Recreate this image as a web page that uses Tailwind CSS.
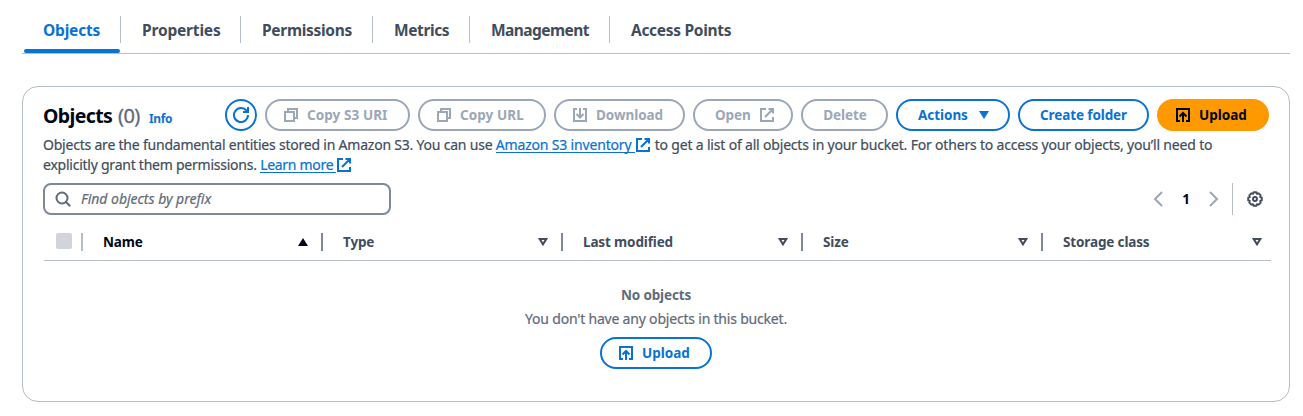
<!DOCTYPE html>
<html lang="en">
<head>
<meta charset="utf-8">
<title>Objects</title>
<script src="https://cdn.jsdelivr.net/npm/@tailwindcss/browser@4"></script>
</head>
<body class="h-[416px] overflow-hidden bg-white pl-[22px] pr-[13px] font-['Noto_Sans',sans-serif] text-sm text-[#414d5c]">
<svg class="hidden">
  <symbol id="copy" viewBox="0 0 16 16"><path fill="none" stroke="currentColor" stroke-width="2" d="M2 5h9v9H2zM5 5V2h9v9h-3"/></symbol>
  <symbol id="external" viewBox="0 0 16 16"><path fill="none" stroke="currentColor" stroke-width="2" d="M14 10v4H2V2h5M9.500 2H14v4.500M6 10l8-8"/></symbol>
  <symbol id="download" viewBox="0 0 16 16"><path fill="none" stroke="currentColor" stroke-width="2" d="M5 2H2v12h12V2h-3M8 1v9.500M4.500 7 8 10.500 11.500 7"/></symbol>
  <symbol id="upload" viewBox="0 0 16 16"><path fill="none" stroke="currentColor" stroke-width="2" d="M5 14H2V2h12v12h-3M8 15V6M4.500 9.500 8 6l3.500 3.500"/></symbol>
  <symbol id="down" viewBox="0 0 10 8"><path fill="none" stroke="currentColor" stroke-width="2" d="M1.700 1h6.600L5 6.300z"/></symbol>
</svg>

<nav class="flex h-[54px] border-b border-[#b6bec9] pt-4 text-[15.5px] leading-[28px] font-bold">
  <div class="relative ml-0.5 h-[27px] w-[97px] border-r border-[#b6bec9] pl-[19px] tracking-[-0.2px] text-[#0972d3]">Objects<span class="absolute top-[33px] left-0 h-1 w-24 rounded-[2px] bg-[#0972d3]"></span></div>
  <div class="h-[27px] w-[120px] border-r border-[#b6bec9] pl-[21px] tracking-[-0.18px]">Properties</div>
  <div class="h-[27px] w-[132px] border-r border-[#b6bec9] pl-[21px] tracking-[-0.3px]">Permissions</div>
  <div class="h-[27px] w-[97px] border-r border-[#b6bec9] pl-[21px] tracking-[-0.4px]">Metrics</div>
  <div class="h-[27px] w-[140px] border-r border-[#b6bec9] pl-[21px] tracking-[-0.55px]">Management</div>
  <div class="h-[27px] pl-[21px] tracking-[-0.3px]">Access Points</div>
</nav>

<main class="mt-8 h-[316px] rounded-2xl border border-[#b6bec9] px-5 pt-3">
  <header class="flex h-8 items-center justify-between">
    <h1 class="flex items-baseline pt-0.5 leading-8 whitespace-nowrap"><span class="w-[75px] text-[19.5px] font-bold tracking-[-0.62px] text-[#000716]">Objects</span><span class="w-[31px] text-[20px] tracking-[-0.6px] text-[#5f6b7a] [-webkit-text-stroke:0.3px_currentColor]">(0)</span><a class="text-xs font-bold tracking-[-0.4px] text-[#0972d3]">Info</a></h1>
    <div class="flex gap-2 text-[13.5px] font-bold whitespace-nowrap">
      <button class="flex size-8 items-center justify-center rounded-full border-2 border-[#0972d3] text-[#0972d3]"><svg class="size-4" viewBox="0 0 16 16" fill="none" stroke="currentColor" stroke-width="2"><path d="M10 5h5V0M15 8a7 7 0 1 1-1.500-4.300L14.700 5"/></svg></button>
      <button class="flex h-8 w-[145px] items-center rounded-full border-2 border-[#9ba7b6] pl-4 tracking-[0.08px] text-[#9ba7b6]"><svg class="mr-2 size-4"><use href="#copy"/></svg><span class="pt-0.5">Copy S3 URI</span></button>
      <button class="flex h-8 w-32 items-center rounded-full border-2 border-[#9ba7b6] pl-4 tracking-[0.08px] text-[#9ba7b6]"><svg class="mr-2 size-4"><use href="#copy"/></svg><span class="pt-0.5">Copy URL</span></button>
      <button class="flex h-8 w-[131px] items-center rounded-full border-2 border-[#9ba7b6] pl-4 tracking-[-0.05px] text-[#9ba7b6]"><svg class="mr-2 size-4"><use href="#download"/></svg><span class="pt-0.5">Download</span></button>
      <button class="flex h-8 w-[100px] items-center rounded-full border-2 border-[#9ba7b6] pl-5 text-[#9ba7b6]"><span class="w-11 pt-0.5 text-left tracking-[-0.1px]">Open</span><svg class="size-4"><use href="#external"/></svg></button>
      <button class="h-8 w-[87px] rounded-full border-2 border-[#9ba7b6] pt-0.5 pl-px tracking-[-0.1px] text-[#9ba7b6]">Delete</button>
      <button class="flex h-8 w-[114px] items-center rounded-full border-2 border-[#0972d3] pl-5 text-[#0972d3]"><span class="w-[61px] pt-0.5 text-left tracking-[-0.05px]">Actions</span><svg class="h-2 w-2.5" viewBox="0 0 10 8" fill="currentColor"><path d="M0 0h10L5 8z"/></svg></button>
      <button class="h-8 w-[131px] rounded-full border-2 border-[#0972d3] pt-0.5 tracking-[-0.1px] text-[#0972d3]">Create folder</button>
      <button class="flex h-8 w-28 items-center rounded-full bg-[#ff9900] pl-[18px] text-[#000716]"><svg class="mr-2 size-4"><use href="#upload"/></svg><span class="pt-0.5">Upload</span></button>
    </div>
  </header>

  <p class="mt-1 leading-5 whitespace-nowrap [-webkit-text-stroke:0.2px_currentColor]"><span class="tracking-[-0.213px]">Objects are the fundamental entities stored in Amazon S3. You can use </span><a class="inline-block h-[18px] w-[139px] border-b border-[#0972d3] align-top tracking-[-0.17px] text-[#0972d3]">Amazon S3 inventory</a><svg class="mt-0.5 mr-1 inline-block size-4 align-top text-[#0972d3]"><use href="#external"/></svg><span class="tracking-[-0.185px]">to get a list of all objects in your bucket. For others to access your objects, you’ll need to</span><br><span class="tracking-[-0.24px]">explicitly grant them permissions. </span><a class="inline-block h-[18px] w-[76px] border-b border-[#0972d3] align-top tracking-[-0.3px] text-[#0972d3]">Learn more</a><svg class="mt-0.5 inline-block size-4 align-top text-[#0972d3]"><use href="#external"/></svg></p>

  <div class="mt-2 flex h-8 items-center justify-between">
    <div class="flex h-8 w-[348px] items-center rounded-lg border-2 border-[#7d8998] pl-[10px] text-[#5f6b7a]">
      <svg class="mr-2.5 size-4" viewBox="0 0 16 16" fill="none" stroke="currentColor" stroke-width="2"><circle cx="7" cy="7" r="5.500"/><path d="m11 11 4.200 4.200"/></svg><span class="tracking-[-0.02px] italic [-webkit-text-stroke:0.2px_currentColor]">Find objects by prefix</span>
    </div>
    <div class="flex h-8 items-center pr-1.5">
      <svg class="size-4 text-[#9ba7b6]" viewBox="0 0 16 16" fill="none" stroke="currentColor" stroke-width="2"><path d="M12 1 5 8l7 7"/></svg>
      <span class="w-10 pt-0.5 text-center text-[13.5px] font-bold text-[#000716]">1</span>
      <svg class="size-4 text-[#9ba7b6]" viewBox="0 0 16 16" fill="none" stroke="currentColor" stroke-width="2"><path d="m4 1 7 7-7 7"/></svg>
      <span class="mr-3.5 ml-2.5 h-8 w-px bg-[#b6bec9]"></span>
      <svg class="size-4" viewBox="0 0 16 16" fill="none" stroke="currentColor" stroke-width="1.900" stroke-linejoin="round"><path d="M6.600 1.200h2.800l.6 1.600 1.700-.5 2 2-.5 1.700 1.600.6v2.800l-1.600.6.5 1.700-2 2-1.700-.5-.6 1.600H6.600L6 13.200l-1.700.5-2-2 .5-1.700-1.600-.6V6.600L2.800 6l-.5-1.700 2-2 1.700.5z"/><circle cx="8" cy="8" r="2"/></svg>
    </div>
  </div>

  <div class="mt-2 mr-[-2px] ml-px flex h-[38px] items-center border-b border-[#b6bec9] text-[13.5px] font-bold tracking-[-0.14px]">
    <span class="mb-0.5 ml-3 size-4 rounded-[2px] bg-[#d1d5db]"></span><span class="ml-[9px] h-[18px] w-0.5 bg-[#b6bec9]"></span>
    <div class="flex w-[240px] items-center text-[#000716]"><span class="ml-5 w-[195px] pt-0.5">Name</span><svg class="h-2 w-2.5" viewBox="0 0 10 8" fill="currentColor"><path d="M0 8h10L5 0z"/></svg><span class="ml-[13px] h-[18px] w-0.5 bg-[#7d8998]"></span></div>
    <div class="flex w-[240px] items-center"><span class="ml-5 w-[195px] pt-0.5">Type</span><svg class="h-2 w-2.5"><use href="#down"/></svg><span class="ml-[13px] h-[18px] w-0.5 bg-[#7d8998]"></span></div>
    <div class="flex w-[240px] items-center"><span class="ml-5 w-[195px] pt-0.5">Last modified</span><svg class="h-2 w-2.5"><use href="#down"/></svg><span class="ml-[13px] h-[18px] w-0.5 bg-[#7d8998]"></span></div>
    <div class="flex w-[240px] items-center"><span class="ml-5 w-[195px] pt-0.5">Size</span><svg class="h-2 w-2.5"><use href="#down"/></svg><span class="ml-[13px] h-[18px] w-0.5 bg-[#7d8998]"></span></div>
    <div class="flex items-center"><span class="ml-5 w-[189px] pt-0.5">Storage class</span><svg class="h-2 w-2.5"><use href="#down"/></svg></div>
  </div>

  <div class="flex flex-col items-center pt-6 text-[#5f6b7a]">
    <b class="text-[13.5px] leading-5 tracking-[-0.15px]">No objects</b>
    <p class="mt-1 leading-5 tracking-[-0.2px] [-webkit-text-stroke:0.2px_currentColor]">You don't have any objects in this bucket.</p>
    <button class="mt-2 flex h-8 w-28 items-center rounded-full border-2 border-[#0972d3] pl-4 text-[13.5px] font-bold text-[#0972d3]"><svg class="mr-2 size-4"><use href="#upload"/></svg><span class="pt-0.5">Upload</span></button>
  </div>
</main>
</body>
</html>
